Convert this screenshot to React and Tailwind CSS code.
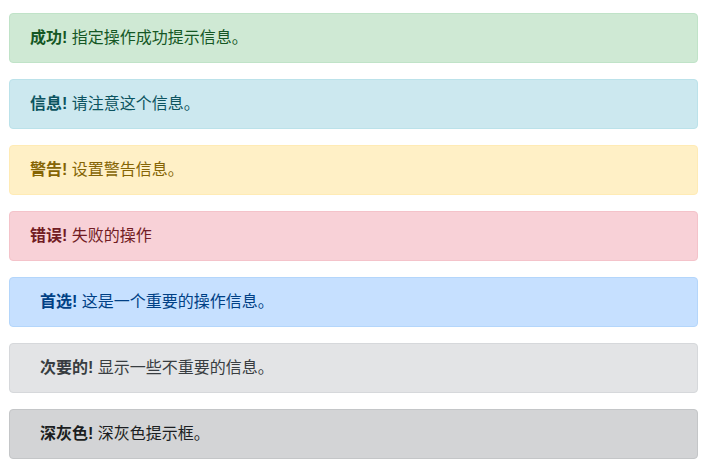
const alerts = [
  { label: '成功!', text: '指定操作成功提示信息。', box: 'bg-[#cfe9d4] border-[#c0e3c8] text-[#155724] pl-[20px]' },
  { label: '信息!', text: '请注意这个信息。', box: 'bg-[#cce8ef] border-[#bbe2ea] text-[#0c5460] pl-[20px]' },
  { label: '警告!', text: '设置警告信息。', box: 'bg-[#fff0c6] border-[#ffebb5] text-[#856404] pl-[20px]' },
  { label: '错误!', text: '失败的操作', box: 'bg-[#f8d1d7] border-[#f4c3ca] text-[#721c24] pl-[20px]' },
  { label: '首选!', text: '这是一个重要的操作信息。', box: 'bg-[#c6e0ff] border-[#b4d6fb] text-[#004085] pl-[30px]' },
  { label: '次要的!', text: '显示一些不重要的信息。', box: 'bg-[#e3e4e6] border-[#d6d8db] text-[#383d41] pl-[30px]' },
  { label: '深灰色!', text: '深灰色提示框。', box: 'bg-[#d3d4d6] border-[#c4c6c8] text-[#1b1e21] pl-[30px]' },
]

export default function App() {
  return (
    <div className="min-h-[470px] bg-white pt-[13px] pl-[9px] font-['Helvetica','Liberation_Sans','Noto_Sans_CJK_SC',sans-serif]">
      <div className="flex w-[689px] flex-col gap-4">
        {alerts.map(a => (
          <div key={a.label} className={`h-[50px] rounded border pr-5 py-3 text-[16px] leading-6 ${a.box}`}>
            <strong className="font-bold">{a.label}</strong> {a.text}
          </div>
        ))}
      </div>
    </div>
  )
}
